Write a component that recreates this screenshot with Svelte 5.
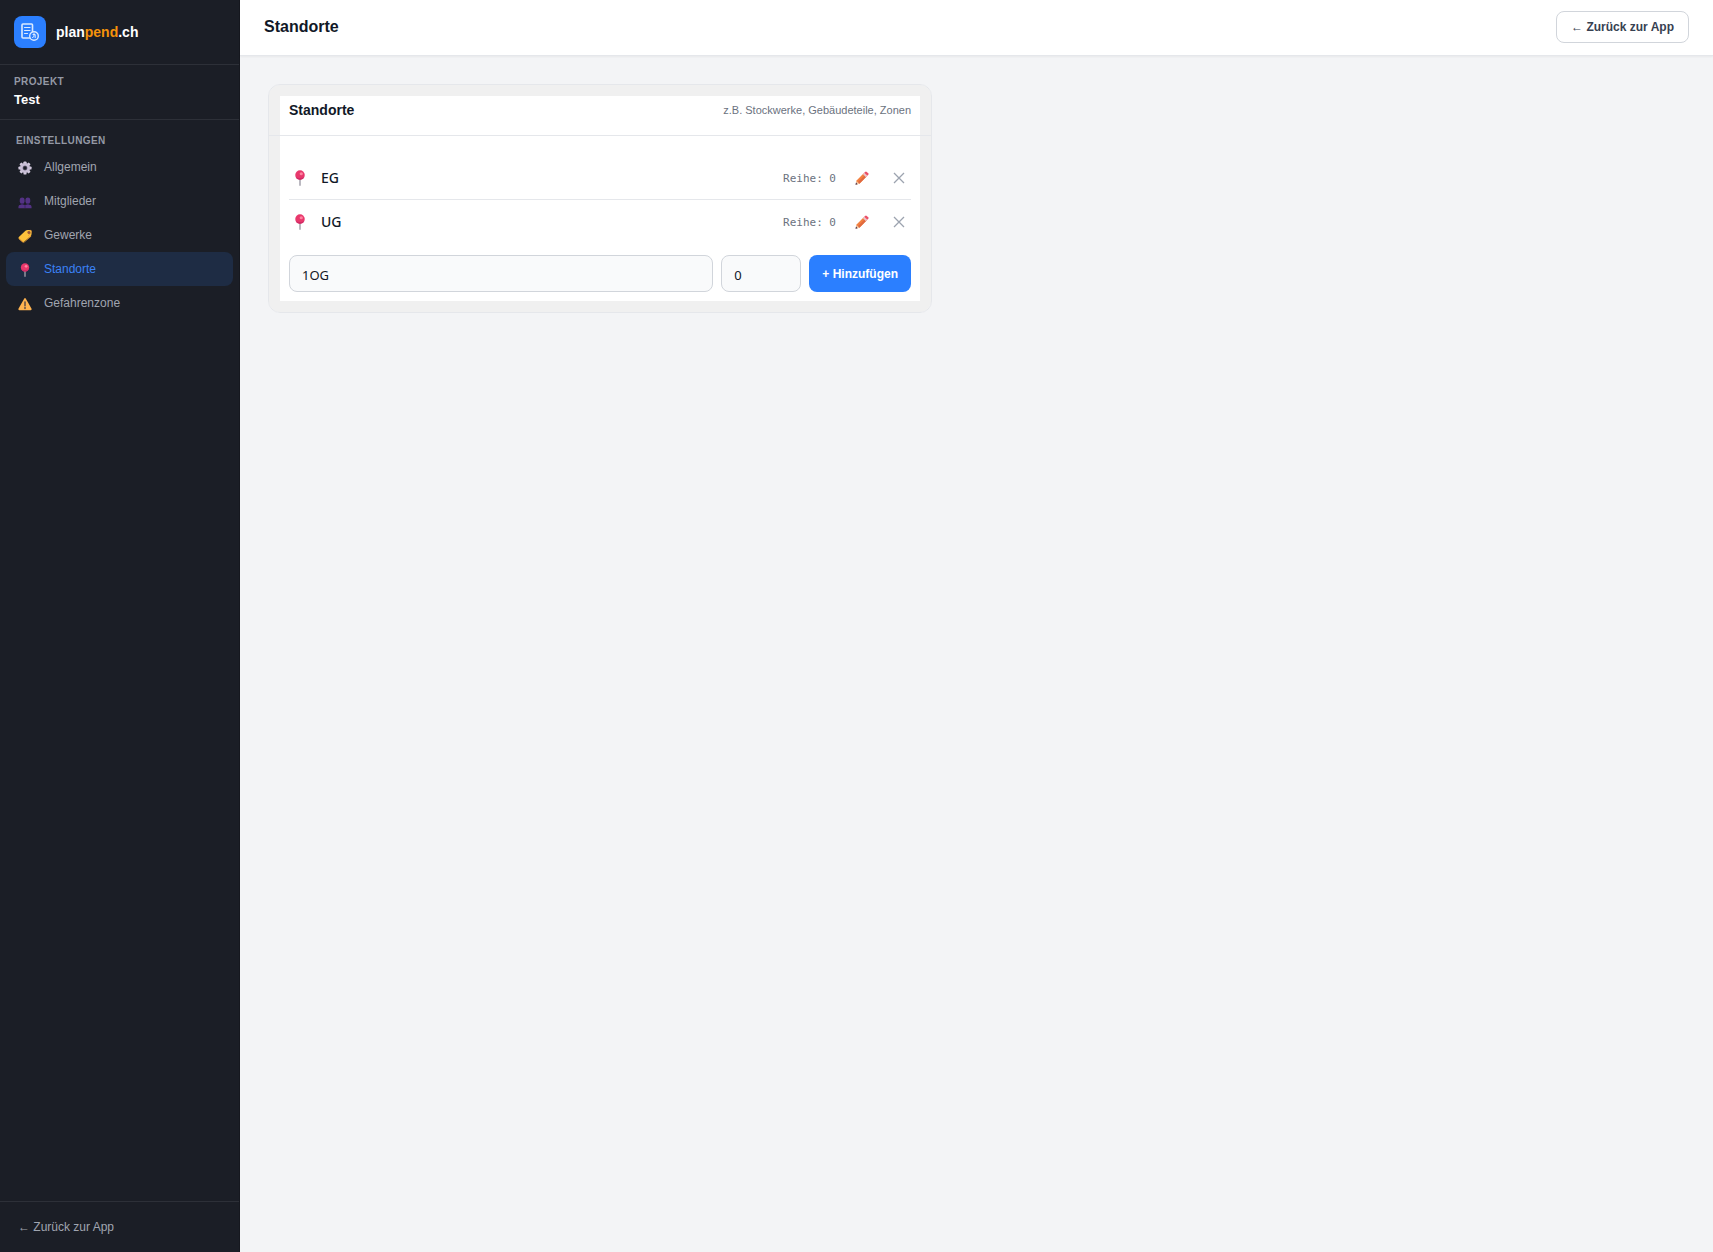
<script lang="ts">
  type NavIcon = 'gear' | 'users' | 'tag' | 'pin' | 'warning';

  interface Location {
    id: number;
    name: string;
    order: number;
  }

  const navItems: { label: string; icon: NavIcon }[] = [
    { label: 'Allgemein', icon: 'gear' },
    { label: 'Mitglieder', icon: 'users' },
    { label: 'Gewerke', icon: 'tag' },
    { label: 'Standorte', icon: 'pin' },
    { label: 'Gefahrenzone', icon: 'warning' },
  ];

  const teeth = [0, 45, 90, 135, 180, 225, 270, 315];

  let active = $state('Standorte');
  let locations = $state<Location[]>([
    { id: 1, name: 'EG', order: 0 },
    { id: 2, name: 'UG', order: 0 },
  ]);
  let newName = $state('1OG');
  let newOrder = $state('0');

  function addLocation(event: SubmitEvent) {
    event.preventDefault();
    const name = newName.trim();
    if (!name) return;
    locations.push({ id: Date.now(), name, order: Number(newOrder) || 0 });
    newName = '';
    newOrder = '0';
  }

  function removeLocation(id: number) {
    locations = locations.filter((l) => l.id !== id);
  }
</script>

{#snippet icon(name: NavIcon)}
  <svg class="icon" viewBox="0 0 32 32" aria-hidden="true">
    {#if name === 'gear'}
      {#each teeth as angle}
        <rect x="12.5" y="1" width="7" height="9" rx="2" fill="#d3cade" transform="rotate({angle} 16 16)" />
      {/each}
      <circle cx="16" cy="16" r="8" fill="none" stroke="#c9bfd6" stroke-width="7" />
      <circle cx="16" cy="16" r="5" fill="#1b1e26" stroke="#8f83a3" stroke-width="1.4" />
    {:else if name === 'users'}
      <g fill="#533284">
        <path d="M4 11a5.500 5.500 0 0 1 11 0v4a5.500 5.500 0 0 1-11 0z" />
        <path d="M17 11a5.500 5.500 0 0 1 11 0v4a5.500 5.500 0 0 1-11 0z" />
        <path d="M1 30v-3a5 5 0 0 1 5-5h8a5 5 0 0 1 2 1 5 5 0 0 1 2-1h8a5 5 0 0 1 5 5v3z" />
      </g>
      <path d="M7 18h5v5H7zM20 18h5v5h-5z" fill="#3d2568" />
      <path d="M16 23v7" stroke="#321d55" stroke-width="1.5" />
    {:else if name === 'tag'}
      <path d="M2 18 17 4q2-2 5-2h6q3 0 3 3v6q0 3-2 5L14 29q-2 2-4 0l-8-7q-2-2 0-4z" fill="#fcc23c" />
      <path d="M2 20 12 29q1 1 3 0L30 14v3L15 30q-3 2-5 0l-8-7z" fill="#e89a35" />
      <circle cx="25" cy="8" r="3.4" fill="#8b4b38" />
      <path d="M25 8c0-6 6-6 6-2s-4 6-8 9" fill="none" stroke="#d3883e" stroke-width="1.6" />
    {:else if name === 'pin'}
      <path d="M14.500 17h3v14.500h-3z" fill="#a5a2ad" />
      <circle cx="16" cy="10" r="9.5" fill="#e8386c" />
      <path d="M7 13a9.5 9.5 0 0 0 18 0c-4 4-14 4-18 0z" fill="#d02c66" />
      <circle cx="18.500" cy="7.5" r="3.2" fill="#ff82a0" />
    {:else}
      <path d="M14 4q2-3 4 0l13 23q1 3-2 3H3q-3 0-2-3z" fill="#ffb34f" />
      <path d="M16 11v9M16 23.5v3" stroke="#473c43" stroke-width="3" stroke-linecap="round" />
    {/if}
  </svg>
{/snippet}

<div class="layout">
  <aside class="sidebar">
    <div class="brand">
      <svg class="logo" viewBox="0 0 32 32" aria-hidden="true">
        <rect width="32" height="32" rx="8" fill="#2b7fff" />
        <g fill="none" stroke="#dbeaff" stroke-linecap="round" stroke-linejoin="round">
          <path d="M15.500 22H9q-1 0-1-1V9q0-1 1-1h8.500q1 0 1 1v6.500" stroke-width="1.600" />
          <path d="M10.500 11.500h5.500M10.500 14.500h5.500M10.500 17.500h3" stroke-width="1.200" />
          <circle cx="20" cy="20" r="4.300" stroke-width="1.400" />
          <path d="M20 17.500v3l-1.500 1M19 18.500h2.200v3.200" stroke-width="1" />
        </g>
      </svg>
      <span class="brand-name">plan<span class="accent">pend</span>.ch</span>
    </div>

    <div class="project">
      <div class="label">PROJEKT</div>
      <div class="project-name">Test</div>
    </div>

    <nav class="nav">
      <div class="label nav-label">EINSTELLUNGEN</div>
      {#each navItems as item}
        <a
          class="nav-item"
          class:active={active === item.label}
          href="#{item.label.toLowerCase()}"
          onclick={() => (active = item.label)}
        >
          <span class="nav-icon">{@render icon(item.icon)}</span>
          <span>{item.label}</span>
        </a>
      {/each}
    </nav>

    <div class="sidebar-footer">
      <a class="back-link" href="#app"><span class="arrow">←</span> Zurück zur App</a>
    </div>
  </aside>

  <main class="main">
    <header class="topbar">
      <h1>Standorte</h1>
      <button class="btn-outline" type="button"><span class="arrow">←</span> Zurück zur App</button>
    </header>

    <div class="content">
      <section class="card">
        <div class="card-header">
          <h2>Standorte</h2>
          <span class="hint">z.B. Stockwerke, Gebäudeteile, Zonen</span>
        </div>

        <div class="card-body">
          <ul class="list">
            {#each locations as location (location.id)}
              <li class="row">
                <span class="row-icon">{@render icon('pin')}</span>
                <span class="row-name">{location.name}</span>
                <span class="row-order">Reihe: {location.order}</span>
                <button class="icon-btn" type="button" aria-label="Bearbeiten">
                  <svg class="icon" viewBox="0 0 32 32" aria-hidden="true">
                    <path d="M3 22 20 5l7 7-17 17-8 2z" fill="#f3803f" />
                    <path d="M6.500 25.500 23.500 8.500 27 12 10 29z" fill="#e0693f" />
                    <path d="M3 22l7 7-8 2.500z" fill="#f4c9a5" />
                    <path d="M2.300 26.500l3.500 3.500-4.800 1.500z" fill="#3c2c4c" />
                    <path d="M18 7l3-3 7 7-3 3z" fill="#e9c4cc" />
                    <path d="M21 4l2-2q2-2 4 0l3 3q2 2 0 4l-2 2z" fill="#ec4f66" />
                  </svg>
                </button>
                <button
                  class="icon-btn remove"
                  type="button"
                  aria-label="Löschen"
                  onclick={() => removeLocation(location.id)}
                >
                  <svg class="cross" viewBox="0 0 12 12" aria-hidden="true">
                    <path d="M1 1l10 10M11 1 1 11" fill="none" stroke="#9ca3af" stroke-width="1.300" />
                  </svg>
                </button>
              </li>
            {/each}
          </ul>

          <form class="add-form" onsubmit={addLocation}>
            <input class="field name" type="text" aria-label="Name" bind:value={newName} />
            <input class="field order" type="text" inputmode="numeric" aria-label="Reihe" bind:value={newOrder} />
            <button class="btn-primary" type="submit">+ Hinzufügen</button>
          </form>
        </div>
      </section>
    </div>
  </main>
</div>

<style>
  :global(body) {
    margin: 0;
    background: #f3f4f6;
    font-family: 'Liberation Sans', Arial, sans-serif;
    color: #111827;
  }
  .layout {
    display: flex;
    min-height: 100vh;
  }
  .layout :global(*) {
    box-sizing: border-box;
  }
  .icon {
    display: block;
    width: 14px;
    height: 14px;
    flex: none;
  }
  .arrow {
    font-family: 'Liberation Serif', serif;
  }

  /* Sidebar */
  .sidebar {
    width: 240px;
    flex: none;
    display: flex;
    flex-direction: column;
    background: #1b1e26;
    border-right: 1px solid #16181f;
    color: #fff;
  }
  .brand {
    display: flex;
    align-items: center;
    gap: 10px;
    padding: 16px 14px;
    border-bottom: 1px solid #2d3038;
  }
  .logo {
    width: 32px;
    height: 32px;
  }
  .brand-name {
    font-size: 14px;
    font-weight: 700;
  }
  .accent {
    color: #f5920b;
  }
  .project {
    padding: 10px 14px;
    border-bottom: 1px solid #2d3038;
  }
  .label {
    font-size: 10px;
    font-weight: 700;
    line-height: 14px;
    letter-spacing: 0.04em;
    color: #9499a5;
  }
  .project-name {
    margin-top: 2px;
    font-size: 13px;
    font-weight: 700;
    line-height: 18px;
  }
  .nav {
    flex: 1;
    padding: 14px 6px;
  }
  .nav-label {
    padding: 0 10px;
    margin-bottom: 2px;
  }
  .nav-item {
    display: flex;
    align-items: center;
    gap: 12px;
    height: 34px;
    padding: 0 12px;
    border-radius: 8px;
    font-size: 12px;
    color: #a0a5b0;
    text-decoration: none;
  }
  .nav-icon {
    padding-top: 2px;
  }
  .nav-item.active {
    background: #1e2c44;
    color: #3b82f6;
  }
  .sidebar-footer {
    padding: 16px 18px;
    border-top: 1px solid #2d3038;
  }
  .back-link {
    display: block;
    font-size: 12px;
    line-height: 18px;
    color: #a0a5b0;
    text-decoration: none;
  }

  /* Main */
  .main {
    flex: 1;
    min-width: 0;
  }
  .topbar {
    display: flex;
    align-items: center;
    justify-content: space-between;
    height: 56px;
    padding: 0 24px 1px;
    background: #fff;
    border-bottom: 1px solid #e5e7eb;
    box-shadow: 0 1px 2px rgba(0, 0, 0, 0.05);
  }
  h1 {
    margin: 0;
    font-size: 16px;
    font-weight: 700;
  }
  .btn-outline {
    height: 32px;
    padding: 0 14px;
    background: #fff;
    border: 1px solid #d1d5db;
    border-radius: 8px;
    font: 700 12px 'Liberation Sans', Arial, sans-serif;
    color: #374151;
    cursor: pointer;
  }
  .btn-outline .arrow {
    font-weight: 400;
  }
  .content {
    padding: 28px;
  }
  .card {
    max-width: 664px;
    background: #fff;
    border: 1px solid #e5e7eb;
    border-radius: 12px;
    box-shadow: inset 0 0 0 11px #f0f0f0;
  }
  .card-header {
    display: flex;
    align-items: center;
    justify-content: space-between;
    height: 51px;
    padding: 0 20px;
    border-bottom: 1px solid #e5e7eb;
  }
  h2 {
    margin: 0;
    font-size: 14px;
    font-weight: 700;
  }
  .hint {
    font-size: 11px;
    color: #6b7280;
  }
  .card-body {
    padding: 20px;
  }
  .list {
    margin: 0;
    padding: 0;
    list-style: none;
  }
  .row {
    display: flex;
    align-items: center;
    height: 44px;
    border-bottom: 1px solid #e5e7eb;
  }
  .row:last-child {
    height: 43px;
    border-bottom: 0;
  }
  .row-icon {
    padding: 0 13px 0 3px;
  }
  .row-icon .icon {
    width: 16px;
    height: 16px;
  }
  .row-name {
    flex: 1;
    font-family: 'Noto Sans', sans-serif;
    font-size: 14px;
    font-weight: 500;
    line-height: 18px;
  }
  .row-order {
    margin-right: 14px;
    padding-top: 2px;
    font-family: 'DejaVu Sans Mono', monospace;
    font-size: 11px;
    color: #6b7280;
  }
  .icon-btn {
    display: grid;
    place-items: center;
    width: 24px;
    height: 24px;
    padding: 0;
    background: none;
    border: 0;
    cursor: pointer;
  }
  .remove {
    margin-left: 13px;
  }
  .cross {
    width: 12px;
    height: 12px;
  }
  .add-form {
    display: flex;
    gap: 8px;
    margin-top: 12px;
  }
  .field {
    height: 37px;
    padding: 2px 12px 0;
    background: #f9fafb;
    border: 1px solid #d1d5db;
    border-radius: 8px;
    font-family: 'Noto Sans', sans-serif;
    font-size: 13px;
    color: #111827;
  }
  .field.name {
    flex: 1;
    min-width: 0;
  }
  .field.order {
    width: 80px;
  }
  .btn-primary {
    padding: 0 13px;
    background: #2b7fff;
    border: 0;
    border-radius: 8px;
    font: 700 12px 'Liberation Sans', Arial, sans-serif;
    color: #fff;
    cursor: pointer;
  }
</style>
